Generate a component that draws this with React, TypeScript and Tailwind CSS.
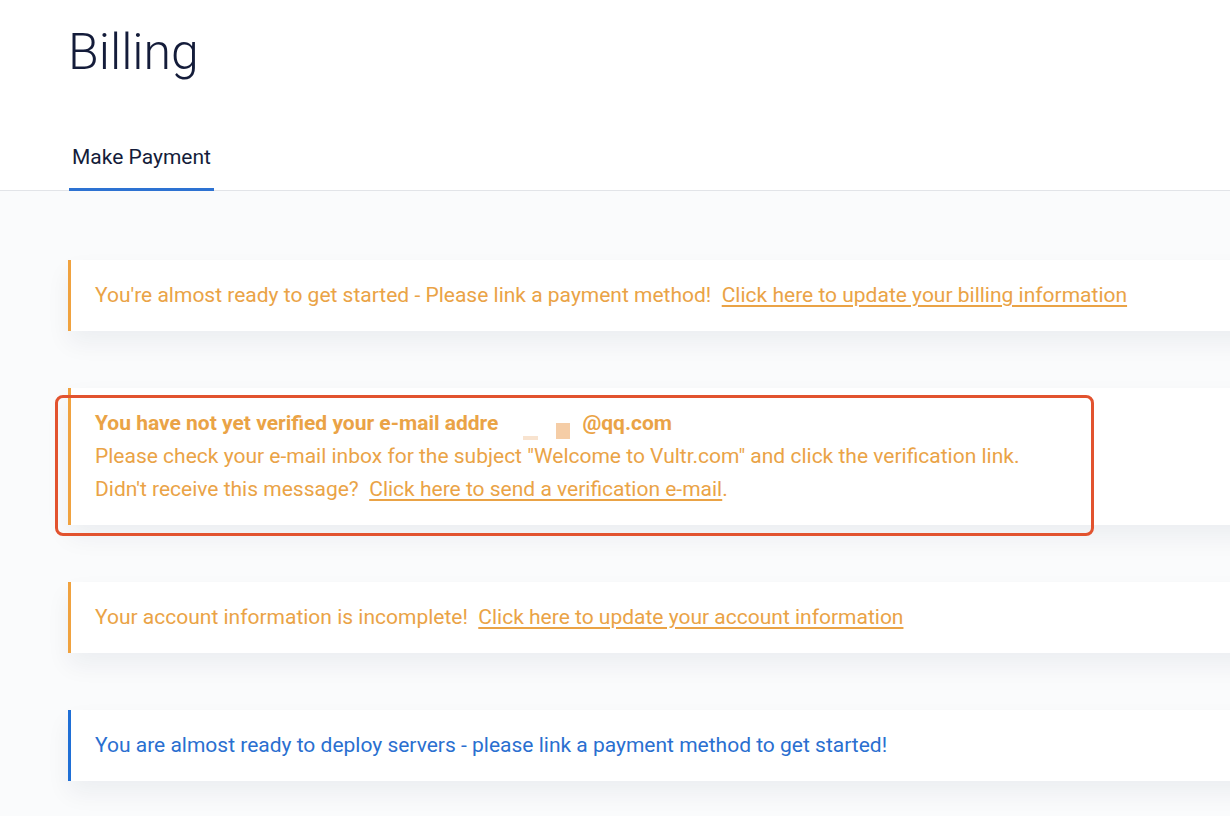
import React from 'react'

const orange = 'text-[#eaa346]'

function Notice({ tone, children }: { tone: 'orange' | 'blue'; children: React.ReactNode }) {
    const border = tone === 'orange' ? 'border-[#f0a23f]' : 'border-[#1f6fd6]'
    const color = tone === 'orange' ? orange : 'text-[#2a6fd0]'
    return (
        <div
            className={`w-[1200px] bg-white border-l-[3px] ${border} ${color} pl-[24px] py-[19px] text-[21px] leading-[33px] shadow-[0_12px_24px_rgba(20,30,60,0.06)]`}
        >
            {children}
        </div>
    )
}

export default function App() {
    return (
        <div className="w-[1230px] h-[816px] overflow-hidden bg-white font-['Roboto',sans-serif]">
            <div className="pl-[68px] pt-[20px] h-[126px]">
                <h1 className="text-[50px] font-light leading-[64px] text-[#141c3a]">Billing</h1>
            </div>

            <div className="border-b border-[#e2e4e8]">
                <div className="pl-[69px] pt-[16px] flex">
                    <div className="px-[3px] pb-[16px] border-b-[3px] border-[#2d72d2] -mb-px">
                        <span className="text-[21px] leading-[30px] text-[#141c3a]">Make Payment</span>
                    </div>
                </div>
            </div>

            <div className="bg-[#fafbfc] pl-[68px] pt-[69px] pb-[40px] flex flex-col gap-[57px]">
                <Notice tone="orange">
                    You're almost ready to get started - Please link a payment method!&nbsp;{' '}
                    <a className="underline underline-offset-[3px]">Click here to update your billing information</a>
                </Notice>

                <div className="relative">
                    <Notice tone="orange">
                        <div className="font-bold flex items-center">
                            <span>You have not yet verified your e-mail addre</span>
                            <span className="relative inline-block w-[84px] h-[33px]">
                                <span className="absolute left-[25px] top-[29px] w-[15px] h-[4px] bg-[#f8e3cf]" />
                                <span className="absolute left-[58px] top-[16px] w-[14px] h-[16px] bg-[#f5cda6]" />
                            </span>
                            <span>@qq.com</span>
                        </div>
                        <div>Please check your e-mail inbox for the subject "Welcome to Vultr.com" and click the verification link.</div>
                        <div>
                            Didn't receive this message?&nbsp;{' '}
                            <a className="underline underline-offset-[3px]">Click here to send a verification e-mail</a>.
                        </div>
                    </Notice>
                    <div className="absolute left-[-13px] top-[7px] w-[1039px] h-[141px] rounded-[8px] border-[3px] border-[#e2532f] pointer-events-none" />
                </div>

                <Notice tone="orange">
                    Your account information is incomplete!&nbsp;{' '}
                    <a className="underline underline-offset-[3px]">Click here to update your account information</a>
                </Notice>

                <Notice tone="blue">
                    You are almost ready to deploy servers - please link a payment method to get started!
                </Notice>
            </div>
        </div>
    )
}
